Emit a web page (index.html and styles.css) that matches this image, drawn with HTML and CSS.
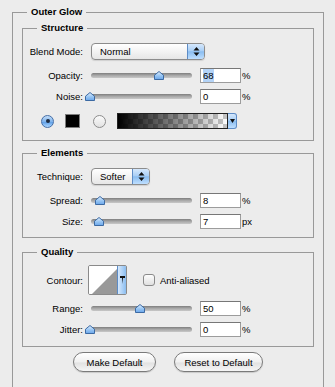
FILE: index.html
```html
<!DOCTYPE html>
<html lang="en">
<head>
    <meta charset="UTF-8">
    <title>Outer Glow</title>
    <link rel="stylesheet" href="styles.css">
</head>
<body>
    <fieldset class="group outer">
        <legend>Outer Glow</legend>

        <!-- Structure -->
        <fieldset class="group section structure">
            <legend>Structure</legend>
            <div class="row row-popup">
                <span class="label">Blend Mode:</span>
                <div class="popup popup-wide">
                    <span class="popup-text">Normal</span>
                    <span class="popup-btn">
                        <svg width="7" height="11" viewBox="0 0 7 11"><path d="M3.5 1 L6.5 4.5 L0.5 4.5 Z M0.5 6.5 L6.5 6.5 L3.5 10 Z" fill="#111"/></svg>
                    </span>
                </div>
            </div>
            <div class="row row-slider">
                <span class="label">Opacity:</span>
                <div class="slider">
                    <div class="track"></div>
                    <svg class="thumb" style="left: 66px" width="10" height="9" viewBox="0 0 10 9"><path d="M5 0.5 L9.5 4.2 L9.5 8.5 L0.5 8.5 L0.5 4.2 Z" fill="url(#thumbFill)" stroke="#3c6aa3"/></svg>
                </div>
                <div class="field"><span class="selected">68</span></div>
                <span class="unit">%</span>
            </div>
            <div class="row row-slider">
                <span class="label">Noise:</span>
                <div class="slider">
                    <div class="track"></div>
                    <svg class="thumb" style="left: -3px" width="10" height="9" viewBox="0 0 10 9"><path d="M5 0.5 L9.5 4.2 L9.5 8.5 L0.5 8.5 L0.5 4.2 Z" fill="url(#thumbFill)" stroke="#3c6aa3"/></svg>
                </div>
                <div class="field">0</div>
                <span class="unit">%</span>
            </div>
            <div class="row row-color">
                <span class="radio radio-on"><span class="dot"></span></span>
                <span class="swatch"></span>
                <span class="radio radio-off"></span>
                <div class="gradient-picker">
                    <span class="gradient"></span>
                    <span class="gradient-btn">
                        <svg width="5" height="4" viewBox="0 0 5 4"><path d="M0 0 L5 0 L2.5 4 Z" fill="#111"/></svg>
                    </span>
                </div>
            </div>
        </fieldset>

        <!-- Elements -->
        <fieldset class="group section elements">
            <legend>Elements</legend>
            <div class="row row-popup">
                <span class="label">Technique:</span>
                <div class="popup popup-narrow">
                    <span class="popup-text">Softer</span>
                    <span class="popup-btn">
                        <svg width="7" height="11" viewBox="0 0 7 11"><path d="M3.5 1 L6.5 4.5 L0.5 4.5 Z M0.5 6.5 L6.5 6.5 L3.5 10 Z" fill="#111"/></svg>
                    </span>
                </div>
            </div>
            <div class="row row-slider">
                <span class="label">Spread:</span>
                <div class="slider">
                    <div class="track"></div>
                    <svg class="thumb" style="left: 7px" width="10" height="9" viewBox="0 0 10 9"><path d="M5 0.5 L9.5 4.2 L9.5 8.5 L0.5 8.5 L0.5 4.2 Z" fill="url(#thumbFill)" stroke="#3c6aa3"/></svg>
                </div>
                <div class="field">8</div>
                <span class="unit">%</span>
            </div>
            <div class="row row-slider">
                <span class="label">Size:</span>
                <div class="slider">
                    <div class="track"></div>
                    <svg class="thumb" style="left: 6px" width="10" height="9" viewBox="0 0 10 9"><path d="M5 0.5 L9.5 4.2 L9.5 8.5 L0.5 8.5 L0.5 4.2 Z" fill="url(#thumbFill)" stroke="#3c6aa3"/></svg>
                </div>
                <div class="field">7</div>
                <span class="unit">px</span>
            </div>
        </fieldset>

        <!-- Quality -->
        <fieldset class="group section quality">
            <legend>Quality</legend>
            <div class="row row-contour">
                <span class="label">Contour:</span>
                <div class="contour">
                    <svg width="28" height="28" viewBox="0 0 28 28"><rect width="28" height="28" fill="#fff"/><path d="M3 28 L28 3 L28 28 Z" fill="#999"/></svg>
                    <span class="contour-btn">
                        <svg width="5" height="8" viewBox="0 0 5 8"><path d="M0 0 L5 0 L5 2 L3 2 L2.5 8 L2 2 L0 2 Z" fill="#111"/></svg>
                    </span>
                </div>
                <span class="checkbox"></span>
                <span class="check-label">Anti-aliased</span>
            </div>
            <div class="row row-slider">
                <span class="label">Range:</span>
                <div class="slider">
                    <div class="track"></div>
                    <svg class="thumb" style="left: 47px" width="10" height="9" viewBox="0 0 10 9"><path d="M5 0.5 L9.5 4.2 L9.5 8.5 L0.5 8.5 L0.5 4.2 Z" fill="url(#thumbFill)" stroke="#3c6aa3"/></svg>
                </div>
                <div class="field">50</div>
                <span class="unit">%</span>
            </div>
            <div class="row row-slider">
                <span class="label">Jitter:</span>
                <div class="slider">
                    <div class="track"></div>
                    <svg class="thumb" style="left: -3px" width="10" height="9" viewBox="0 0 10 9"><path d="M5 0.5 L9.5 4.2 L9.5 8.5 L0.5 8.5 L0.5 4.2 Z" fill="url(#thumbFill)" stroke="#3c6aa3"/></svg>
                </div>
                <div class="field">0</div>
                <span class="unit">%</span>
            </div>
        </fieldset>

        <div class="actions">
            <button class="btn btn-make">Make Default</button>
            <button class="btn btn-reset">Reset to Default</button>
        </div>
    </fieldset>

    <!-- shared gradient for slider thumbs -->
    <svg class="defs" width="0" height="0">
        <defs>
            <linearGradient id="thumbFill" x1="0" y1="0" x2="0" y2="1">
                <stop offset="0" stop-color="#e4f0fd"/>
                <stop offset="0.5" stop-color="#9cc8f4"/>
                <stop offset="1" stop-color="#6aa6ea"/>
            </linearGradient>
        </defs>
    </svg>
</body>
</html>
```

FILE: styles.css
```css
body {
    margin: 0;
    background-color: #ececec;
    font-family: "Liberation Sans", Arial, sans-serif;
    font-size: 9.5px;
    color: #000;
    overflow: hidden;
}

.defs {
    position: absolute;
}

/* group boxes */
.group {
    border: 1px solid #999;
    margin: 0;
    padding: 0;
    min-width: 0;
}

.group legend {
    font-weight: bold;
    line-height: 14px;
    padding: 0 4px;
}

.outer {
    width: 312px;
    height: 383px;
    box-sizing: border-box;
    margin: 5px 0 0 12px;
    padding: 2px 9px 0;
}

.outer > legend {
    margin-left: 5px;
}

.section > legend {
    margin-left: 14px;
}

.structure {
    padding: 8px 0 11px;
}

.elements {
    margin-top: 5px;
    padding: 8px 0 8px;
}

.quality {
    margin-top: 7px;
    padding: 6px 0 9px;
}

/* rows */
.row {
    display: flex;
    align-items: center;
}

.label {
    flex: none;
    width: 60px;
    margin-right: 5px;
    text-align: right;
}

.row-popup {
    height: 17px;
}

.row-slider {
    height: 15px;
    margin-top: 6px;
}

.row-popup + .row-slider {
    margin-top: 8px;
}

.row-color {
    height: 16px;
    margin-top: 9px;
    padding-left: 18px;
}

.row-contour {
    height: 30px;
}

/* popup menus */
.popup {
    display: flex;
    height: 17px;
    box-sizing: border-box;
    margin-left: 3px;
    border: 1px solid #8c8c8c;
    border-radius: 4px;
    background: linear-gradient(#fff, #f3f3f3 50%, #e6e6e6);
    box-shadow: 0 1px 1px rgba(0, 0, 0, 0.12);
    overflow: hidden;
}

.popup-wide {
    width: 114px;
}

.popup-narrow {
    width: 59px;
}

.popup-text {
    flex: 1;
    padding-left: 8px;
    line-height: 15px;
}

.popup-btn {
    width: 16px;
    display: flex;
    align-items: center;
    justify-content: center;
    border-left: 1px solid #5d8cc6;
    background: linear-gradient(#d6e8fc, #a9cff6 45%, #8abdf0 52%, #bfdfff);
}

/* sliders */
.slider {
    position: relative;
    flex: none;
    width: 107px;
    height: 15px;
    margin-right: 5px;
}

.track {
    height: 5px;
    margin: 5px 3px 0;
    border-radius: 3px;
    background: linear-gradient(#7e7e7e, #a9a9a9 50%, #c8c8c8);
}

.thumb {
    position: absolute;
    top: 3px;
}

.field {
    flex: none;
    width: 41px;
    height: 15px;
    box-sizing: border-box;
    border: 1px solid #9c9c9c;
    border-top-color: #777;
    background-color: #fff;
    padding-left: 2px;
    line-height: 13px;
}

.selected {
    display: inline-block;
    background-color: #b3d3f7;
}

.unit {
    margin-left: 1px;
}

/* color row */
.radio {
    flex: none;
    width: 13px;
    height: 13px;
    box-sizing: border-box;
    border-radius: 50%;
    display: flex;
    align-items: center;
    justify-content: center;
}

.radio-on {
    border: 1px solid #456ea6;
    background: linear-gradient(#c4def9, #7fb3ec 50%, #5f9fe6 55%, #acd6ff);
}

.radio-off {
    margin-left: 13px;
    border: 1px solid #8c8c8c;
    background: linear-gradient(#fafafa, #e2e2e2);
}

.dot {
    width: 4px;
    height: 4px;
    border-radius: 50%;
    background-color: #1d2b40;
}

.swatch {
    flex: none;
    width: 15px;
    height: 14px;
    box-sizing: border-box;
    margin-left: 11px;
    border: 1px solid #7d7d7d;
    background-color: #000;
}

.gradient-picker {
    display: flex;
    margin-left: 11px;
}

.gradient {
    width: 111px;
    height: 16px;
    box-sizing: border-box;
    border: 1px solid #222;
    background:
        linear-gradient(to right, #000, rgba(0, 0, 0, 0)),
        repeating-conic-gradient(#c6c6c6 0 25%, #fff 0 50%) 0 0 / 10px 10px;
}

.gradient-btn {
    width: 9px;
    height: 16px;
    box-sizing: border-box;
    display: flex;
    align-items: center;
    justify-content: center;
    border: 1px solid #5d8cc6;
    border-left: none;
    border-radius: 0 3px 3px 0;
    background: linear-gradient(#d6e8fc, #a9cff6 45%, #8abdf0 52%, #bfdfff);
}

/* contour */
.contour {
    display: flex;
    flex: none;
    width: 39px;
    height: 30px;
    box-sizing: border-box;
    border: 1px solid #8a8a8a;
    border-radius: 2px;
    overflow: hidden;
}

.contour-btn {
    flex: 1;
    display: flex;
    align-items: center;
    justify-content: center;
    border-left: 1px solid #5d8cc6;
    background: linear-gradient(to right, #d6e8fc, #a9cff6 60%, #8abdf0);
}

.checkbox {
    flex: none;
    width: 12px;
    height: 12px;
    box-sizing: border-box;
    margin-left: 16px;
    border: 1px solid #8a8a8a;
    border-radius: 3px;
    background: linear-gradient(#fdfdfd, #e0e0e0);
}

.check-label {
    margin-left: 5px;
}

/* buttons */
.actions {
    display: flex;
    justify-content: center;
    gap: 18px;
    margin-top: 5px;
}

.btn {
    height: 20px;
    padding: 0;
    border: 1px solid #7a7a7a;
    border-radius: 10px;
    background: linear-gradient(#fff, #f0f0f0 50%, #e2e2e2 55%, #f6f6f6);
    font-family: inherit;
    font-size: inherit;
    color: #000;
    box-shadow: 0 1px 1px rgba(0, 0, 0, 0.15);
}

.btn-make {
    width: 83px;
}

.btn-reset {
    width: 89px;
}
```
